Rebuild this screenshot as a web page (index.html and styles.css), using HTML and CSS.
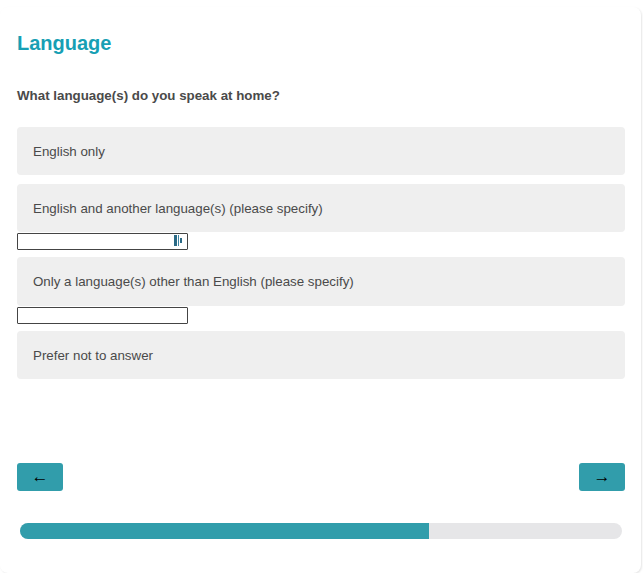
FILE: index.html
```html
<!doctype html>
<html>
	<head>
		<title>Language</title>
		<meta charset="utf-8"/>
		<link rel="stylesheet" href="styles.css">
	</head>
	<body>
		<div class="card">
			<h2 class="title">Language</h2>
			<p class="question">What language(s) do you speak at home?</p>

			<div class="answers">
				<label class="answer">English only</label>

				<label class="answer">English and another language(s) (please specify)</label>
				<div class="specify">
					<input type="text" class="other"/>
					<svg class="pwIcon" width="8" height="11" viewBox="0 0 8 11">
						<rect x="0" y="0" width="3" height="11" fill="#2b6a86"/>
						<rect x="4" y="0" width="1" height="11" fill="#3d86a3"/>
						<rect x="6" y="3" width="2" height="5" fill="#2b6a86"/>
					</svg>
				</div>

				<label class="answer third">Only a language(s) other than English (please specify)</label>
				<div class="specify">
					<input type="text" class="other"/>
				</div>

				<label class="answer">Prefer not to answer</label>
			</div>

			<div class="nav">
				<button class="navButton">&larr;</button>
				<button class="navButton">&rarr;</button>
			</div>

			<div class="progress">
				<div class="progressFill" style="width:68%;"></div>
			</div>
		</div>
	</body>
</html>
```

FILE: styles.css
```css
*{
	padding:0;margin:0;
	box-sizing:border-box;
	font-family:"Liberation Sans", Arial, sans-serif;
}

body{
	background-color:#fff;
	padding-top:7px;
}

.card{
	width:641px;
	height:566px;
	background-color:#fff;
	border-radius:8px;
	box-shadow:1px 1px 2px rgba(0,0,0,0.1);
	padding:24px 16px 0 17px;
}

.title{
	font-size:20px;
	line-height:24px;
	font-weight:bold;
	color:#179fb4;
}

.question{
	margin-top:33px;
	font-size:13.33px;
	line-height:16px;
	font-weight:bold;
	color:#4a4a4a;
}

.answers{
	margin-top:23px;
	display:flex;
	flex-direction:column;
}

.answer{
	display:flex;
	align-items:center;
	height:48px;
	padding:0 16px;
	background-color:#efefef;
	border-radius:4px;
	font-size:13.33px;
	color:#4a4a4a;
	margin-bottom:9px;
}

.third{
	height:49px;
}

.answer + .specify{
	margin-top:-9px;
	margin-bottom:8px;
}

.specify{
	position:relative;
	width:171px;
	height:17px;
}

.other{
	width:171px;
	height:17px;
	border:1px solid #444;
	border-radius:1px;
	background:#fff;
	outline:none;
}

.pwIcon{
	position:absolute;
	top:3px;
	right:6px;
}

.nav{
	display:flex;
	justify-content:space-between;
	margin-top:75px;
}

.navButton{
	width:46px;
	height:28px;
	border:none;
	border-radius:3px;
	background-color:#319dab;
	color:#000;
	font-size:17px;
	cursor:pointer;
}

.progress{
	margin:32px 3px 0 3px;
	height:16px;
	border-radius:8px;
	background-color:#e6e6e8;
	overflow:hidden;
}

.progressFill{
	height:100%;
	background-color:#319dab;
}
```
